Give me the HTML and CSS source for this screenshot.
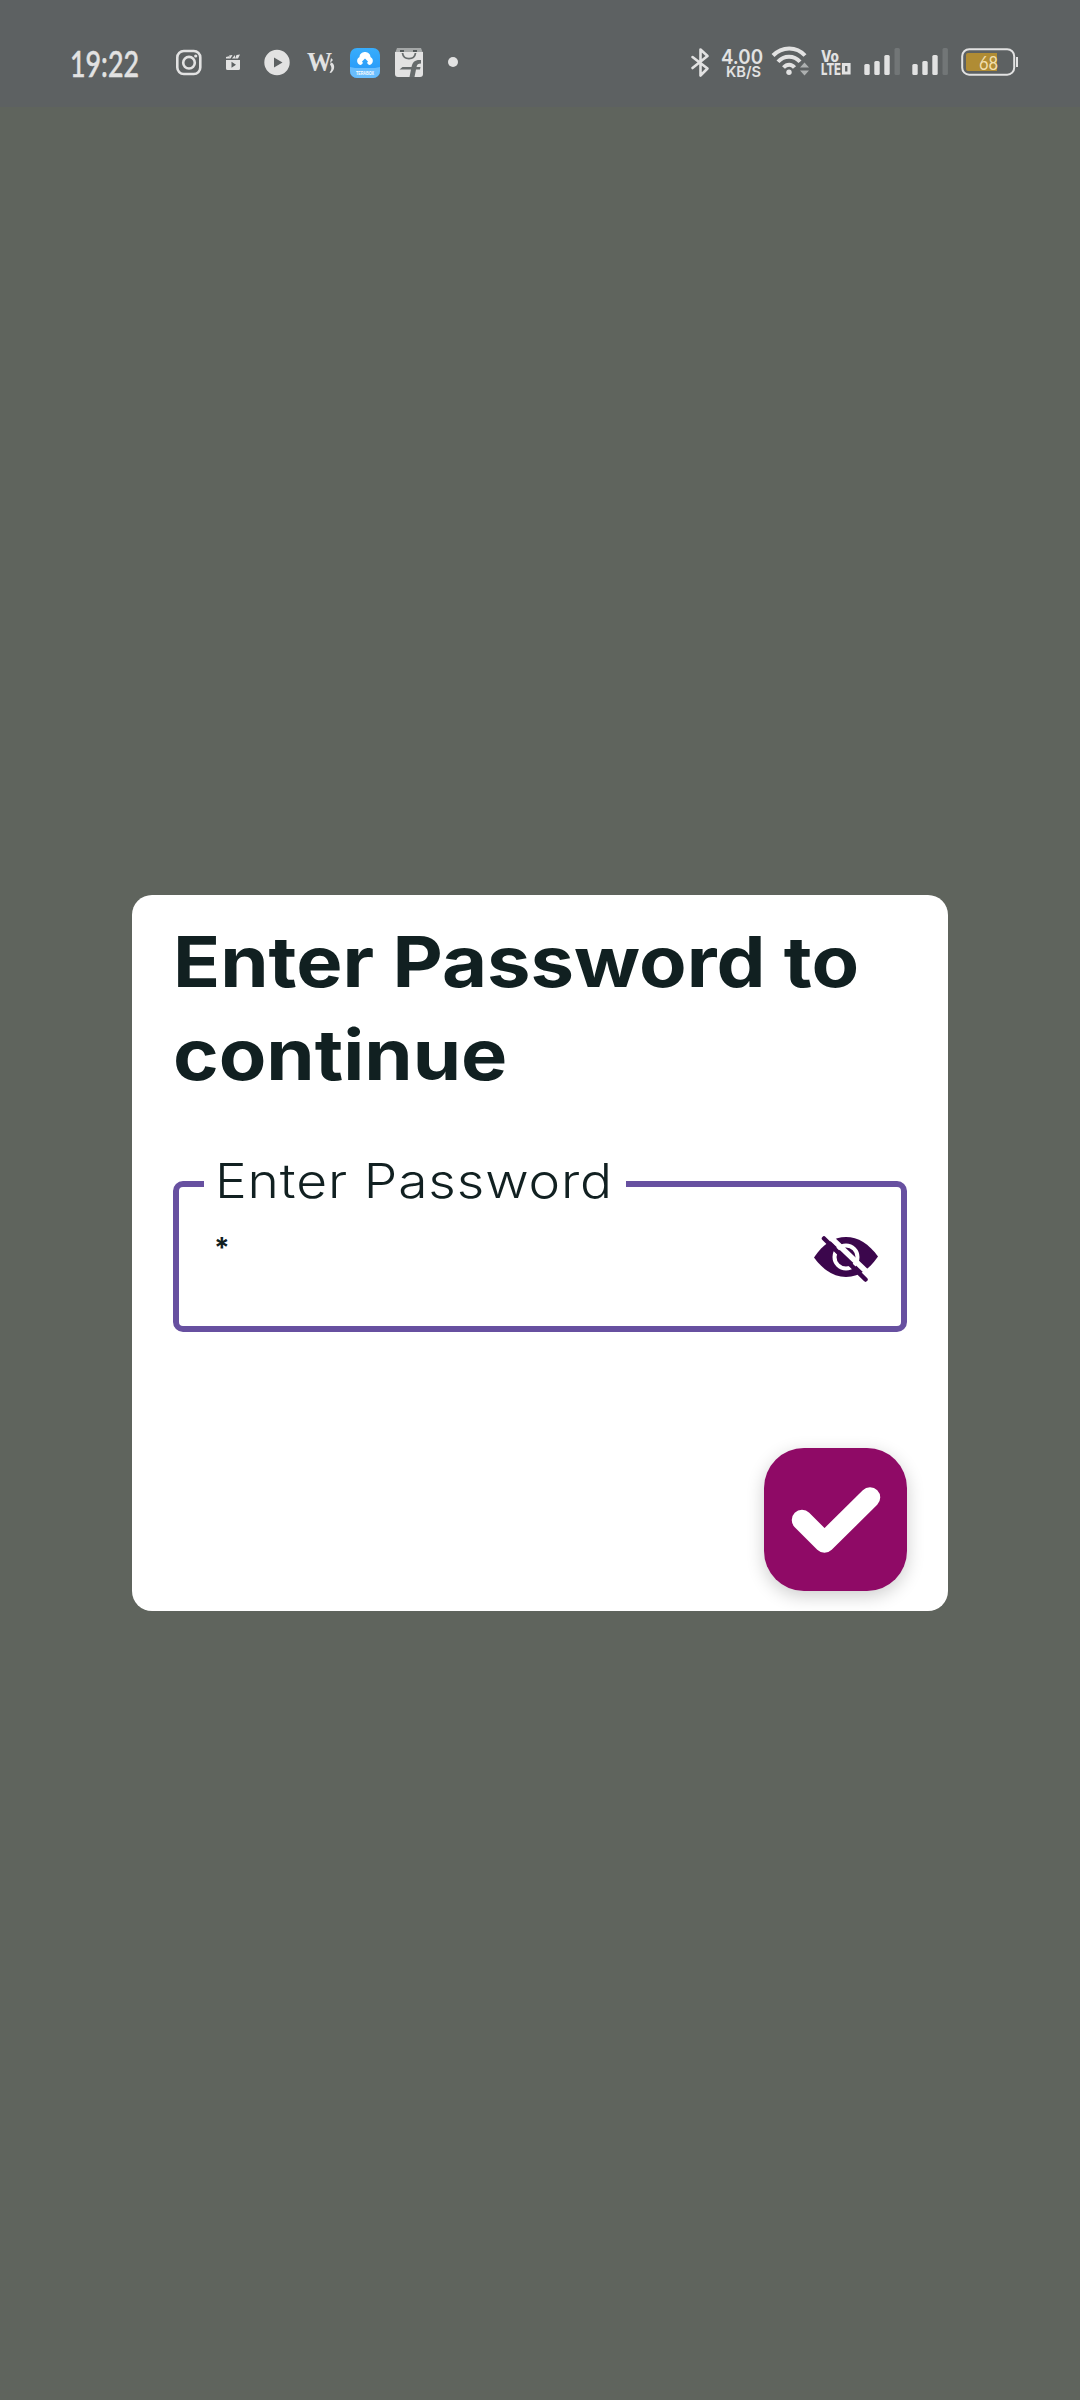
FILE: index.html
```html
<!DOCTYPE html>
<html lang="en">
<head>
<meta charset="utf-8">
<title>Enter Password</title>
<link rel="stylesheet" href="styles.css">
</head>
<body>
<div class="screen">
  <header class="status">
    <div class="group">
      <svg width="96" height="40" viewBox="68 42 96 40"><text class="clock" x="70" y="77" textLength="69" lengthAdjust="spacingAndGlyphs">19:22</text></svg>
      <svg width="50" height="40" viewBox="164 42 50 40"><rect class="line" x="177.3" y="51" width="23" height="23" rx="6.5"/><circle class="line" cx="189" cy="62.7" r="5.8"/><circle cx="195.7" cy="56" r="1.6"/></svg>
      <svg width="39" height="40" viewBox="214 42 39 40"><path fill-rule="evenodd" d="M226.5 60h13.5v8.5a1.5 1.5 0 0 1-1.5 1.5h-11a1.5 1.5 0 0 1-1.5-1.5V60zM231.5 61.8v6l4.5-3z"/><path d="M226 58.5v-1.5l3-.8 1.5 2.3zM229 55.5l3.5-.5-2 3.5zM235 55l-3 3.500h3zM240 54.500l-3.500.5-1.500 3.500h3z"/></svg>
      <svg width="45" height="40" viewBox="253 42 45 40"><path fill-rule="evenodd" d="M264.300 62.500a12.700 12.700 0 1 0 25.400 0a12.700 12.700 0 1 0-25.400 0zM274 57.500v10l8.500-5z"/></svg>
      <svg width="45" height="40" viewBox="298 42 45 40"><text class="serif" x="307" y="71" textLength="25" lengthAdjust="spacingAndGlyphs">W</text><path d="M331 58l2 2-3 3zM331 62.500c4 1 4.500 7 0 10.500l-1.500-.5c2.500-3 2.500-5 .5-8z"/></svg>
      <svg width="45" height="40" viewBox="343 42 45 40">
        <defs><linearGradient id="sky" x2="0" y2="1"><stop offset="0" stop-color="#38adfc"/><stop offset="1" stop-color="#2496f8"/></linearGradient></defs>
        <rect x="350" y="48" width="30" height="30" rx="7" fill="url(#sky)"/><path fill="#69bdfd" d="M350 67l5 1h20l5-1v4a7 7 0 0 1-7 7h-16a7 7 0 0 1-7-7z"/>
        <path fill="#fff" d="M361 65c-4 0-5.500-6-1.500-8 0-4 4-5 5.500-5s5.500 1 5.500 5c4 2 2.500 8-1.500 8l-2-2 1-1.500-3-3-3 3 1 1.500z"/>
        <text class="tera" x="356" y="74.500" textLength="18" lengthAdjust="spacingAndGlyphs">TERABOX</text>
      </svg>
      <svg width="48" height="40" viewBox="388 42 48 40"><path d="M397 48h24l1.500 4H395.500z" fill="#a5a8a8"/><path d="M400 50h4v2h-4zm13 0h4v2h-4z" fill="#555b5c"/><path d="M395 52h28v22a3 3 0 0 1-3 3h-22a3 3 0 0 1-3-3z"/><path d="M402.500 53c1 7.500 12 7.500 13 0" fill="none" stroke="#686d6e" stroke-width="1.800"/><path d="M421 60c-6-.5-8.500 2-9.500 7h-9l-3 2.500h11.500l-1.500 7.500h5l1.500-7.500h4l.5-2.500h-4c.5-2.500 1.500-3.500 4.500-3.500z" fill="#666b6c"/></svg>
      <svg width="34" height="40" viewBox="436 42 34 40"><circle cx="453" cy="62" r="5"/></svg>
    </div>
    <div class="group">
      <svg width="32" height="40" viewBox="684 42 32 40"><path class="line" d="M692.500 57l15 11.500-7 7V49.500l7 6.500-15 12"/></svg>
      <svg width="51" height="40" viewBox="716 42 51 40"><text class="rate" x="721" y="63.500" textLength="42" lengthAdjust="spacingAndGlyphs">4.00</text><text class="unit" x="726" y="77" textLength="35" lengthAdjust="spacingAndGlyphs">KB/S</text></svg>
      <svg width="48" height="40" viewBox="767 42 48 40"><path class="arc" d="M773 55.500c9-9.500 23.500-9.500 32 0M778 61.800c6-6.800 16-6.800 22 0M783.500 67.500c3.500-3.700 8-3.700 11 0"/><circle cx="789" cy="72.300" r="2.700"/><path d="M800 67.500l4.500-5 4.500 5zM800 70.500h9l-4.500 5z" fill="#adb0b0"/></svg>
      <svg width="43" height="40" viewBox="815 42 43 40"><text class="volte" x="821" y="61.500" textLength="18" lengthAdjust="spacingAndGlyphs">Vo</text><text class="volte" x="821" y="74.700" textLength="20" lengthAdjust="spacingAndGlyphs">LTE</text><path d="M843.500 64.500h5.500v8.500h-5.500z" fill="none" stroke="#e2e2e2" stroke-width="3.200"/></svg>
      <svg width="48" height="40" viewBox="858 42 48 40"><rect x="864.300" y="64" width="5.400" height="11" rx="1.500"/><rect x="874.300" y="61" width="5.400" height="14" rx="1.500"/><rect x="884.300" y="55" width="5.400" height="20" rx="1.500"/><rect class="off" x="894.500" y="48" width="5.400" height="27" rx="1.500"/></svg>
      <svg width="48" height="40" viewBox="906 42 48 40"><rect x="912.300" y="64" width="5.400" height="11" rx="1.500"/><rect x="922.300" y="61" width="5.400" height="14" rx="1.500"/><rect x="932.300" y="55" width="5.400" height="20" rx="1.500"/><rect class="off" x="942.500" y="48" width="5.400" height="27" rx="1.500"/></svg>
      <svg width="126" height="40" viewBox="954 42 126 40"><rect x="962.200" y="49.200" width="52" height="25.500" rx="7" fill="none" stroke="#e2e2e2" stroke-width="2"/><path d="M968 53h29v18h-29a2 2 0 0 1-2-2v-14a2 2 0 0 1 2-2z" fill="#b08c34"/><rect x="1016" y="57" width="2" height="10"/><text class="charge" x="979" y="70" textLength="19" lengthAdjust="spacingAndGlyphs">68</text></svg>
    </div>
  </header>
  <main class="stage">
    <form class="card">
      <h1 class="title"><span class="wide">Enter Password to</span><br><span class="wide">continue</span></h1>
      <fieldset class="field">
        <legend class="label"><span class="wide">Enter Password</span></legend>
        <span class="value">*</span>
        <svg class="eye" width="64" height="46" viewBox="0 0 64 46">
          <path fill="#3b064c" d="M0 21.500C9 8 20 1 32 1s23 7 32 19.500C55 34 44 41 32 41S9 34 0 21.500z"/>
          <circle cx="32" cy="21" r="11.500" fill="none" stroke="#fff" stroke-width="4"/>
          <path d="M13.500-1.500L56 39" stroke="#fff" stroke-width="5.500"/>
          <path d="M10 2.500L51.500 43.500" stroke="#3b064c" stroke-width="4.500" stroke-linecap="round"/>
        </svg>
      </fieldset>
      <button class="confirm" type="button" aria-label="Confirm">
        <svg width="143" height="143" viewBox="0 0 143 143"><path d="M38 72L60.500 94.500 106 49.500" fill="none" stroke="#fff" stroke-width="20.500" stroke-linecap="round" stroke-linejoin="round"/></svg>
      </button>
    </form>
  </main>
</div>
</body>
</html>
```
FILE: styles.css
```css
* { box-sizing: border-box; }
body { margin: 0; background: #5f645d; font-family: Inter, sans-serif; color: #112021; }
svg { display: block; flex: none; overflow: visible; }
.screen { width: 1080px; height: 2400px; display: flex; flex-direction: column; }
.status { height: 107px; padding: 42px 0 0 68px; background: #5d6162; display: flex; justify-content: space-between; align-items: flex-start; }
.group { display: flex; fill: #e2e2e2; }
.line { fill: none; stroke: #e2e2e2; stroke-width: 2.6; stroke-linejoin: round; stroke-linecap: round; }
.arc { fill: none; stroke: #e2e2e2; stroke-width: 4; }
.clock { font: 500 36px Lato, sans-serif; stroke: #e2e2e2; stroke-width: .5px; }
.serif { font: bold 27px "Liberation Serif", serif; }
.tera { font: bold 5px "Liberation Sans", sans-serif; fill: #fff; }
.rate { font: 600 20px Inter, sans-serif; }
.unit { font: 600 15px Inter, sans-serif; }
.volte { font: 800 16px Inter, sans-serif; }
.charge { font: 20px Lato, sans-serif; fill: #f2dfae; }
.off { fill: #727677; }
.stage { padding: 788px 132px 0; }
.card { height: 716px; padding: 20px 41px; background: #fff; border-radius: 20px; display: flex; flex-direction: column; }
.title { margin: 0; font-size: 70px; line-height: 93px; font-weight: 700; white-space: nowrap; }
.wide { display: inline-block; transform: scaleX(1.11); transform-origin: 0 50%; }
.field { height: 178px; margin: 53px 0 0; min-width: 0; padding: 0 23px 0 25px; border: 6px solid #6750a0; border-radius: 10px; display: flex; justify-content: space-between; align-items: flex-start; }
.label { width: 422px; height: 60px; padding: 0 0 0 11px; font-size: 48px; line-height: 54px; font-weight: 300; letter-spacing: .8px; white-space: nowrap; }
.value { padding-left: 10px; font: bold 28px/40px Inter, sans-serif; margin-top: 14px; }
.eye { margin-top: 22px; }
.confirm { margin: auto 0 0 auto; width: 143px; height: 143px; padding: 0; border: 0; border-radius: 40px; background: #8f0a66; box-shadow: 0 5px 18px rgba(0, 0, 0, .2); }
```
